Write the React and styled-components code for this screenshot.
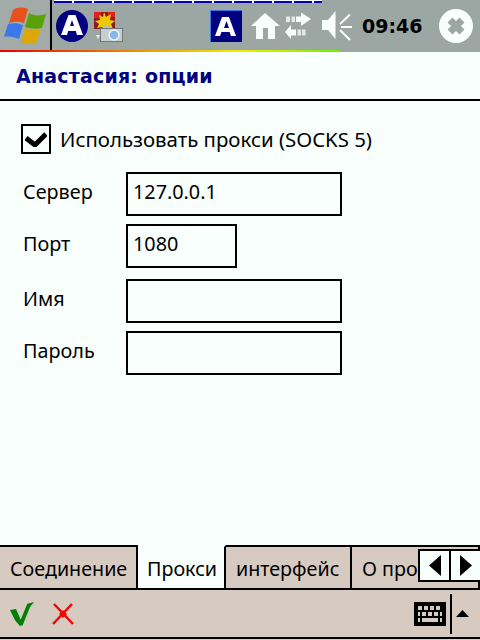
import styled, { createGlobalStyle } from "styled-components";

const GlobalStyle = createGlobalStyle`
  html, body {
    margin: 0;
    padding: 0;
    background: #f8fffc;
  }
  body {
    font-family: "Noto Sans", "DejaVu Sans", sans-serif;
    color: #000;
  }
`;

const Screen = styled.div`
  width: 480px;
  height: 640px;
  display: flex;
  flex-direction: column;
  overflow: hidden;
  background: #f8fffc;
`;

const TaskBar = styled.div`
  height: 52px;
  display: flex;
  background: #9ca6a3;
  position: relative;
  flex-shrink: 0;
`;

const StartButton = styled.div`
  width: 50px;
  height: 50px;
  border-right: 2px solid #000;
  background: #a3aba8;
  svg {
    display: block;
  }
`;

const TrayArea = styled.div`
  flex: 1;
  height: 52px;
  display: flex;
  align-items: center;
  padding-left: 4px;
  position: relative;
`;

const TrayItem = styled.div`
  display: flex;
  margin-left: ${(p) => p.$left ?? 0}px;
  margin-right: ${(p) => (p.$push ? "auto" : "0")};
`;

const Ticker = styled.div`
  position: absolute;
  left: 2px;
  top: 0;
  width: 268px;
  height: 3px;
  box-sizing: border-box;
  border-top: 1px solid #f8fffc;
  background: repeating-linear-gradient(90deg, #0000b8 0 18px, #f8fffc 18px 20px);
`;

const Rainbow = styled.div`
  position: absolute;
  left: 0;
  bottom: 0;
  width: 340px;
  height: 2px;
  background: linear-gradient(90deg, #e80000 0%, #f0a000 45%, #f0f000 70%, #70f000 100%);
`;

const Clock = styled.span`
  font: bold 19px "DejaVu Sans", sans-serif;
  width: 60px;
  margin-left: 9px;
  white-space: nowrap;
`;

const TitleRow = styled.div`
  height: 49px;
  box-sizing: border-box;
  border-bottom: 2px solid #000;
  display: flex;
  align-items: center;
  padding-left: 16px;
  flex-shrink: 0;
`;

const Title = styled.h1`
  margin: 0;
  font: bold 19px "DejaVu Sans", sans-serif;
  letter-spacing: 0.2px;
  color: #000080;
`;

const Form = styled.div`
  flex: 1;
  padding: 23px 0 0 21px;
  display: flex;
  flex-direction: column;
`;

const CheckRow = styled.label`
  display: flex;
  align-items: center;
  gap: 9px;
  height: 30px;
  font-size: 20.4px;
  margin-bottom: 18px;
`;

const CheckBox = styled.span`
  width: 30px;
  height: 30px;
  box-sizing: border-box;
  border: 2px solid #000;
  display: flex;
  align-items: center;
  justify-content: center;
`;

const FieldRow = styled.div`
  display: flex;
  height: 44px;
  margin-bottom: ${(p) => p.$gap}px;
`;

const FieldLabel = styled.span`
  width: 105px;
  padding-left: 2px;
  box-sizing: border-box;
  font-size: 19.8px;
  line-height: 40px;
`;

const FieldInput = styled.div`
  width: ${(p) => p.$width}px;
  height: 44px;
  box-sizing: border-box;
  border: 2px solid #000;
  font-size: 19.8px;
  line-height: 36px;
  padding-left: 5px;
`;

const TabBar = styled.div`
  height: 45px;
  display: flex;
  position: relative;
  border-bottom: 2px solid #000;
  background: #d7cbc1;
  box-sizing: border-box;
  flex-shrink: 0;
  overflow: hidden;
`;

const Tab = styled.div`
  box-sizing: border-box;
  width: ${(p) => p.$width}px;
  flex-shrink: 0;
  height: 43px;
  padding-left: ${(p) => p.$pad}px;
  border-top: 2px solid ${(p) => (p.$active ? "transparent" : "#000")};
  border-right: 2px solid #000;
  background: ${(p) => (p.$active ? "#f8fffc" : "#d7cbc1")};
  background-clip: ${(p) => (p.$active ? "border-box" : "padding-box")};
  font-size: 19.7px;
  line-height: 44px;
  white-space: nowrap;
`;

const Scroller = styled.div`
  position: absolute;
  right: 0;
  top: 4px;
  width: 62px;
  height: 33px;
  box-sizing: border-box;
  border: 2px solid #000;
  border-right: 0;
  background: #f8fffc;
  display: flex;
`;

const ScrollButton = styled.div`
  flex: 1;
  display: flex;
  align-items: center;
  justify-content: center;
  & + & {
    border-left: 2px solid #000;
  }
`;

const ToolBar = styled.div`
  height: 49px;
  box-sizing: border-box;
  flex-shrink: 0;
  background: #d7cbc1;
  border-bottom: 2px solid #000;
  display: flex;
  align-items: center;
  padding-left: 10px;
`;

const ToolButton = styled.div`
  display: flex;
  margin-left: ${(p) => p.$left ?? 0}px;
  margin-right: ${(p) => (p.$push ? "auto" : "0")};
`;

const InputPanel = styled.div`
  height: 40px;
  width: 24px;
  margin-left: 4px;
  border-left: 2px solid #000;
  display: flex;
  align-items: center;
  padding-left: 4px;
`;

const BottomEdge = styled.div`
  height: 1px;
  flex-shrink: 0;
  background: #d7cbc1;
`;

const WindowsFlag = () => (
  <svg width="50" height="50" viewBox="0 0 50 50">
    <path d="M13 10C18 7 23 7 28 9L24 23C19 21 14 21 9 23Z" fill="#e8501c" />
    <path d="M29 13C34 16 40 16 46 14L42 28C37 29 31 29 25 27Z" fill="#5aa008" />
    <path d="M8 24C13 23 18 23 23 25L19 39C14 37 9 36 4 37Z" fill="#3a78e8" />
    <path d="M25 28C30 30 36 31 41 29L36 43C31 44 26 44 21 42Z" fill="#dca808" />
  </svg>
);

const LetterBadge = () => (
  <svg width="32" height="32" viewBox="0 0 32 32">
    <circle cx="16" cy="16" r="16" fill="#000080" />
    <path d="M12.500 5h7L27 25h-6l-1.200-4h-7.600L11 25H5Z M14 16h4l-2-6Z" fill="#fff" fillRule="evenodd" />
  </svg>
);

const CameraIcon = () => (
  <svg width="30" height="31" viewBox="0 0 30 31">
    <rect x="0.500" y="0.500" width="22" height="18" fill="#8a1c1c" stroke="#d09090" />
    <path d="M1 1h7v6H1Z M15 1h7v5h-7Z" fill="#e02020" />
    <path d="M11 1l2 5 5-3-1 6 5 1-4 3 2 5-6-1-2 3-3-4-5 1 2-4-4-3 5-1-1-5 4 2Z" fill="#f0c800" />
    <path d="M3 24h4l-2 4Z" fill="#e8ecec" />
    <rect x="10" y="15" width="6" height="3" fill="#b8bec0" />
    <rect x="7.500" y="17.500" width="22" height="13" fill="#c8ced0" stroke="#707878" />
    <circle cx="21" cy="24" r="5" fill="#88b8e8" stroke="#f0f4f8" strokeWidth="1.500" />
  </svg>
);

const SquareA = () => (
  <svg width="32" height="32" viewBox="0 0 32 32">
    <rect width="32" height="32" fill="#000080" />
    <path d="M0 0h32v1H1v31H0Z" fill="#3a78e8" />
    <path d="M12 7h7l7 19h-5l-1.500-4h-8L10 26H5Z M14 18h5l-2.500-7Z" fill="#fff" fillRule="evenodd" />
  </svg>
);

const HomeIcon = () => (
  <svg width="29" height="26" viewBox="0 0 29 26">
    <path d="M14 0L29 13h-5v13h-7V15h-5v11H5V13H0Z" fill="#f8fffc" />
  </svg>
);

const SyncIcon = () => (
  <svg width="26" height="28" viewBox="0 0 26 28" fill="#f8fffc">
    <path d="M1 4.500h4V10H1Z M6.500 4.500h3.500V10H6.500Z" fill="#e4eae7" />
    <path d="M11 4.500h5V0.500L26 7 16 14v-4h-5Z" />
    <path d="M0 20L6 13v4.500h5v6H6V27Z" />
    <path d="M12.500 17.500h3.500v6h-3.500Z M17 17.500h3.500v6H17Z" fill="#e4eae7" />
  </svg>
);

const SpeakerIcon = () => (
  <svg width="31" height="30" viewBox="0 0 31 30" fill="#f8fffc" stroke="#f8fffc">
    <path d="M0 9h6l7.500-9v28L6 19H0Z" stroke="none" />
    <path d="M18 13L28 3.500M19 16H30M18 19L28 29" strokeWidth="2" fill="none" />
  </svg>
);

const CloseIcon = () => (
  <svg width="34" height="34" viewBox="0 0 34 34">
    <circle cx="17" cy="17" r="17" fill="#f8fffc" />
    <path d="M11 11l12 12M23 11L11 23" stroke="#9ca6a3" strokeWidth="7" />
  </svg>
);

const CheckMark = () => (
  <svg width="22" height="16" viewBox="0 0 22 16">
    <path d="M1 7l9 7L21 3" stroke="#000" strokeWidth="5" fill="none" />
  </svg>
);

const OkIcon = () => (
  <svg width="24" height="24" viewBox="0 0 24 24">
    <path d="M0 8L6 7 10.700 17.700 17.300 1.700 24 0 20 5 12.700 23.300 10 24 5 18.300Z" fill="#008000" />
  </svg>
);

const CancelIcon = () => (
  <svg width="22" height="22" viewBox="0 0 22 22">
    <path d="M1 21L20 1M2 1L21 21" stroke="#ff0000" strokeWidth="2.500" />
    <path d="M11 7l4 4-4 4-4-4Z" fill="#ff0000" />
  </svg>
);

const Keyboard = () => (
  <svg width="32" height="24" viewBox="0 0 32 24">
    <rect width="32" height="24" fill="#000" />
    <path
      d="M4 4h4v4H4Z M10 4h4v4h-4Z M16 4h4v4h-4Z M22 4h4v4h-4Z
         M4 10h2v4H4Z M8 10h4v4H8Z M14 10h4v4h-4Z M20 10h4v4h-4Z M26 10h2v4h-2Z
         M4 16h2v4H4Z M8 16h16v4H8Z M26 16h2v4h-2Z"
      fill="#d7cbc1"
    />
  </svg>
);

const Arrow = ({ dir }) => (
  <svg width="12" height="21" viewBox="0 0 12 21">
    <path d={dir === "left" ? "M12 0v21L0 10.500Z" : "M0 0v21l12-10.500Z"} fill="#000" />
  </svg>
);

const App = () => (
  <Screen>
    <GlobalStyle />
    <TaskBar>
      <StartButton>
        <WindowsFlag />
      </StartButton>
      <TrayArea>
        <Ticker />
        <TrayItem><LetterBadge /></TrayItem>
        <TrayItem $left={5} $push><CameraIcon /></TrayItem>
        <TrayItem><SquareA /></TrayItem>
        <TrayItem $left={9}><HomeIcon /></TrayItem>
        <TrayItem $left={5}><SyncIcon /></TrayItem>
        <TrayItem $left={11}><SpeakerIcon /></TrayItem>
        <Clock>09:46</Clock>
        <TrayItem $left={17}><CloseIcon /></TrayItem>
        <TrayItem $left={7} />
      </TrayArea>
      <Rainbow />
    </TaskBar>
    <TitleRow>
      <Title>Анастасия: опции</Title>
    </TitleRow>
    <Form>
      <CheckRow>
        <CheckBox>
          <CheckMark />
        </CheckBox>
        Использовать прокси (SOCKS 5)
      </CheckRow>
      <FieldRow $gap={8}>
        <FieldLabel>Сервер</FieldLabel>
        <FieldInput $width={216}>127.0.0.1</FieldInput>
      </FieldRow>
      <FieldRow $gap={11}>
        <FieldLabel>Порт</FieldLabel>
        <FieldInput $width={111}>1080</FieldInput>
      </FieldRow>
      <FieldRow $gap={8}>
        <FieldLabel>Имя</FieldLabel>
        <FieldInput $width={216} />
      </FieldRow>
      <FieldRow $gap={0}>
        <FieldLabel>Пароль</FieldLabel>
        <FieldInput $width={216} />
      </FieldRow>
    </Form>
    <TabBar>
      <Tab $width={138} $pad={10}>Соединение</Tab>
      <Tab $active $width={88} $pad={9}>Прокси</Tab>
      <Tab $width={126} $pad={10}>интерфейс</Tab>
      <Tab $width={128} $pad={10}>О программе</Tab>
      <Scroller>
        <ScrollButton><Arrow dir="left" /></ScrollButton>
        <ScrollButton><Arrow dir="right" /></ScrollButton>
      </Scroller>
    </TabBar>
    <ToolBar>
      <ToolButton><OkIcon /></ToolButton>
      <ToolButton $left={18} $push><CancelIcon /></ToolButton>
      <ToolButton><Keyboard /></ToolButton>
      <InputPanel>
        <svg width="13" height="7" viewBox="0 0 13 7"><path d="M6.500 0L13 7H0Z" fill="#000" /></svg>
      </InputPanel>
    </ToolBar>
    <BottomEdge />
  </Screen>
);

export default App;
